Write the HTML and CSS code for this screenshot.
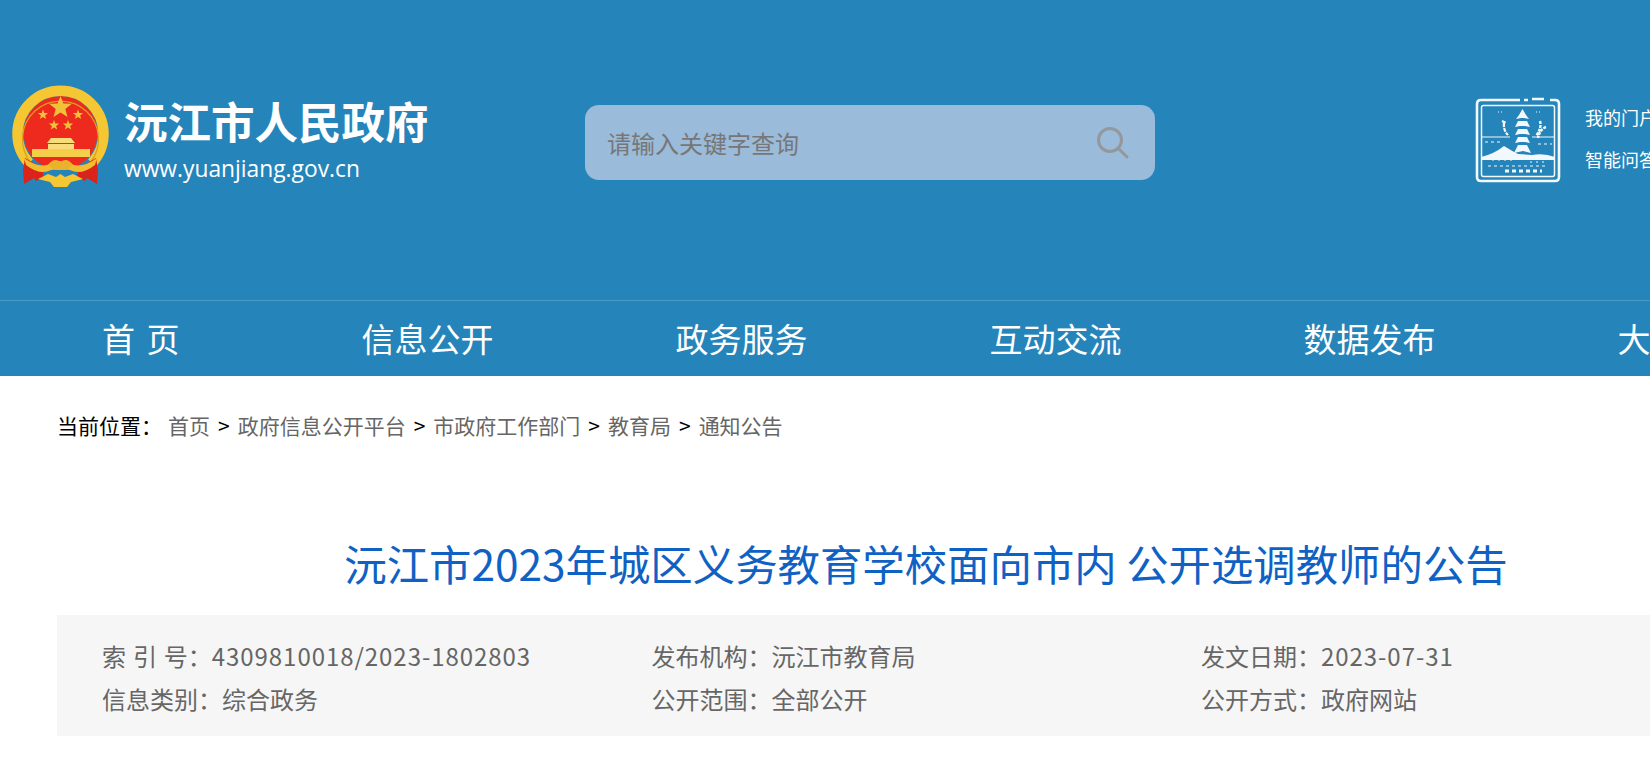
FILE: index.html
```html
<!DOCTYPE html>
<html lang="zh-CN">
<head>
    <meta charset="UTF-8">
    <meta name="viewport" content="width=device-width, initial-scale=1.0">
    <title>沅江市2023年城区义务教育学校面向市内 公开选调教师的公告</title>
    <link rel="stylesheet" href="styles.css">
</head>
<body>
    <div class="page">
        <header class="top">
            <div class="logo">
                <svg class="emblem" viewBox="0 0 110 110" width="110" height="110">
                    <circle cx="55.500" cy="55" r="37" fill="#ee2a1f"/>
                    <path d="M24 85 A43 43 0 1 1 87 85" fill="none" stroke="#f5c733" stroke-width="10.500"/>
                    <path d="M26 85 A38 38 0 1 1 85 85" fill="none" stroke="#dd9f1e" stroke-width="1.200"/>
                    <polygon points="55.500,18 58.400,25.500 66.800,25.800 60.300,31 62.500,39 55.500,34.500 48.500,39 50.700,31 44.200,25.800 52.600,25.500" fill="#f1c13a"/>
                    <polygon points="38,31.500 39.300,35 43.100,35.100 40.100,37.500 41.200,41 38,38.900 34.800,41 35.900,37.500 32.900,35.100 36.700,35" fill="#f1c13a"/>
                    <polygon points="73,31.500 74.300,35 78.100,35.100 75.100,37.500 76.200,41 73,38.900 69.800,41 70.900,37.500 67.900,35.100 71.700,35" fill="#f1c13a"/>
                    <polygon points="49,42 50.300,45.500 54.100,45.600 51.100,48 52.200,51.500 49,49.400 45.800,51.500 46.900,48 43.900,45.600 47.700,45.500" fill="#f1c13a"/>
                    <polygon points="63,42 64.300,45.500 68.100,45.600 65.100,48 66.200,51.500 63,49.400 59.800,51.500 60.900,48 57.900,45.600 61.700,45.500" fill="#f1c13a"/>
                    <path d="M46 60 H66 L70 65 H42 Z M43 66 H69 V71 H43 Z" fill="#f8dc7a"/>
                    <rect x="27" y="71" width="58" height="8" fill="#f5cf4a"/>
                    <path d="M20 80 L37 90 L39 99 L31 103 L29 100 L19 106 L18 92 Z" fill="#d9231b"/>
                    <path d="M91 80 L74 90 L72 99 L80 103 L82 100 L92 106 L93 92 Z" fill="#d9231b"/>
                    <path d="M19 80 Q36 92 46 85 L55 83 L65 85 Q75 92 92 80 L90 87 Q76 98 65 92 L55 91 L46 92 Q35 98 21 87 Z" fill="#f1bd2e"/>
                    <path d="M43 87 Q49 79 55.500 84 Q62 79 68 87 L61 92 H50 Z" fill="#eab22a"/>
                    <path d="M33 101 L43 96 L51 99 L55.500 96 L60 99 L68 96 L78 101 L66 104 L62 109 H49 L45 104 Z" fill="#f5c733"/>
                </svg>
                <div class="site-name">
                    <h1>沅江市人民政府</h1>
                    <p>www.yuanjiang.gov.cn</p>
                </div>
            </div>
            <div class="search">
                <span>请输入关键字查询</span>
                <svg viewBox="0 0 36 36" width="36" height="36">
                    <circle cx="15" cy="15" r="11.500" fill="none" stroke="#93989c" stroke-width="3"/>
                    <path d="M23.500 23.500 L32 32" stroke="#93989c" stroke-width="3" stroke-linecap="round"/>
                </svg>
            </div>
            <svg class="stamp" viewBox="0 0 95 95" width="95" height="95">
                <g fill="none" stroke="#f2f8fc">
                    <path d="M50 8 H11 Q7 8 7 12 V85 Q7 89 11 89 H85 Q89 89 89 85 V12 Q89 8 85 8 H80 M74 7 H62 M58 8 H54" stroke-width="2.600"/>
                    <rect x="11.500" y="13.500" width="73" height="71" rx="2" stroke-width="1.500"/>
                    <path d="M12 45 H40 M62 45 H84" stroke-width="1"/>
                    <path d="M32 29 L36 31 M34 31 Q33 38 38 43" stroke-width="2.200" stroke-dasharray="4 1"/>
                    <path d="M70 29 Q72 36 66 44 M76 35 Q70 37 68 46" stroke-width="2.400" stroke-dasharray="3 1"/>
                    <path d="M18 74 H78" stroke-width="1" stroke-dasharray="3 3"/>
                    <path d="M35 79 H72" stroke-width="3" stroke-dasharray="4 3"/>
                    <path d="M15 50 H30 M68 52 H82" stroke-width="1" stroke-dasharray="3 3"/>
                    <path d="M22 68 H42 M60 70 H76" stroke-width="1" stroke-dasharray="2 4"/>
                    <path d="M28 20 H34 M66 20 H72" stroke-width="1" stroke-dasharray="1 2"/>
                </g>
                <g fill="#f2f8fc">
                    <path d="M52.500 17 L56 23 L59 27 L54 26 L51 26 L46 27 L49 23 Z"/>
                    <path d="M48 29 H57 L60 35 L55 34 L50 34 L45 35 Z"/>
                    <path d="M48 37 H57 L60 43 L55 42 L50 42 L45 43 Z"/>
                    <path d="M48 45 H57 L60 51 L55 50 L50 50 L45 51 Z"/>
                    <path d="M48 53 H57 L61 61 L53 59 L44 61 Z"/>
                    <path d="M11 65 Q24 62 34 54 Q42 59 48 62 L62 63 Q74 61 85 65 V68 H11 Z"/>
                </g>
            </svg>
            <ul class="quick-links">
                <li>我的门户</li>
                <li>智能问答</li>
            </ul>
        </header>

        <nav class="nav">
            <a class="home" href="#">首 页</a>
            <a href="#">信息公开</a>
            <a href="#">政务服务</a>
            <a href="#">互动交流</a>
            <a href="#">数据发布</a>
            <a href="#">大数据</a>
        </nav>

        <main class="main">
            <div class="crumbs">
                <span class="here">当前位置：</span>
                <a href="#">首页</a><b>&gt;</b>
                <a href="#">政府信息公开平台</a><b>&gt;</b>
                <a href="#">市政府工作部门</a><b>&gt;</b>
                <a href="#">教育局</a><b>&gt;</b>
                <a href="#">通知公告</a>
            </div>

            <h2 class="title">沅江市2023年城区义务教育学校面向市内 公开选调教师的公告</h2>

            <div class="info">
                <div><span class="spaced">索 引 号</span>：<span class="num">4309810018/2023-1802803</span></div>
                <div>发布机构：沅江市教育局</div>
                <div>发文日期：<span class="num">2023-07-31</span></div>
                <div>信息类别：综合政务</div>
                <div>公开范围：全部公开</div>
                <div>公开方式：政府网站</div>
            </div>
        </main>
    </div>
</body>
</html>
```

FILE: styles.css
```css
html, body {
    margin: 0;
    padding: 0;
    overflow: hidden;
    background-color: #fff;
}

.page {
    width: 1852px;
    font-family: "Noto Sans CJK SC", "Open Sans", sans-serif;
}

.top {
    display: flex;
    align-items: flex-start;
    height: 222px;
    padding: 78px 0 0 5px;
    background-color: #2585ba;
    border-bottom: 1px solid #4a9ac6;
}

.logo {
    display: flex;
    width: 580px;
}

.emblem {
    flex: none;
}

.site-name {
    margin: 16px 0 0 9px;
    color: #fff;
}

.site-name h1 {
    margin: 0;
    font-size: 43.5px;
    line-height: 54px;
    font-weight: 700;
    white-space: nowrap;
}

.site-name p {
    margin: 6px 0 0;
    font-family: "Open Sans", sans-serif;
    font-size: 22.8px;
    line-height: 30px;
}

.search {
    display: flex;
    align-items: center;
    justify-content: space-between;
    width: 570px;
    height: 75px;
    box-sizing: border-box;
    margin-top: 27px;
    padding: 0 24px 0 22px;
    background-color: #9abbd9;
    border-radius: 14px;
    color: #777;
    font-size: 24px;
}

.stamp {
    flex: none;
    margin-left: 315px;
    margin-top: 14px;
}

.quick-links {
    list-style: none;
    margin: 18px 0 0 20px;
    padding: 0;
    color: #fff;
    font-size: 18px;
    line-height: 42px;
}

.nav {
    display: flex;
    height: 75px;
    padding-left: 11px;
    background-color: #2585ba;
}

.nav a {
    padding: 0 91px;
    color: #fff;
    font-size: 33px;
    line-height: 75px;
    text-decoration: none;
    white-space: nowrap;
}

.nav .home {
    word-spacing: 4px;
}

.main {
    padding: 0 57px;
}

.crumbs {
    display: flex;
    align-items: center;
    height: 98px;
    padding-bottom: 2px;
    font-size: 21px;
}

.crumbs a {
    color: #666;
    text-decoration: none;
}

.crumbs .here {
    margin-right: 6px;
    color: #000;
}

.crumbs b {
    margin: 0 8px;
    font-weight: 400;
    color: #000;
}

.title {
    margin: 0;
    padding: 58px 0 23px;
    color: #0f62c4;
    font-size: 42.4px;
    line-height: 58px;
    font-weight: 400;
    text-align: center;
}

.info {
    display: grid;
    grid-template-columns: repeat(3, 549.5px);
    height: 121px;
    box-sizing: border-box;
    padding: 19px 45px;
    background-color: #f6f6f6;
    color: #666;
    font-size: 24px;
    line-height: 43px;
}

.info .spaced {
    word-spacing: 1.5px;
}

.info .num {
    letter-spacing: 0.95px;
}
```
